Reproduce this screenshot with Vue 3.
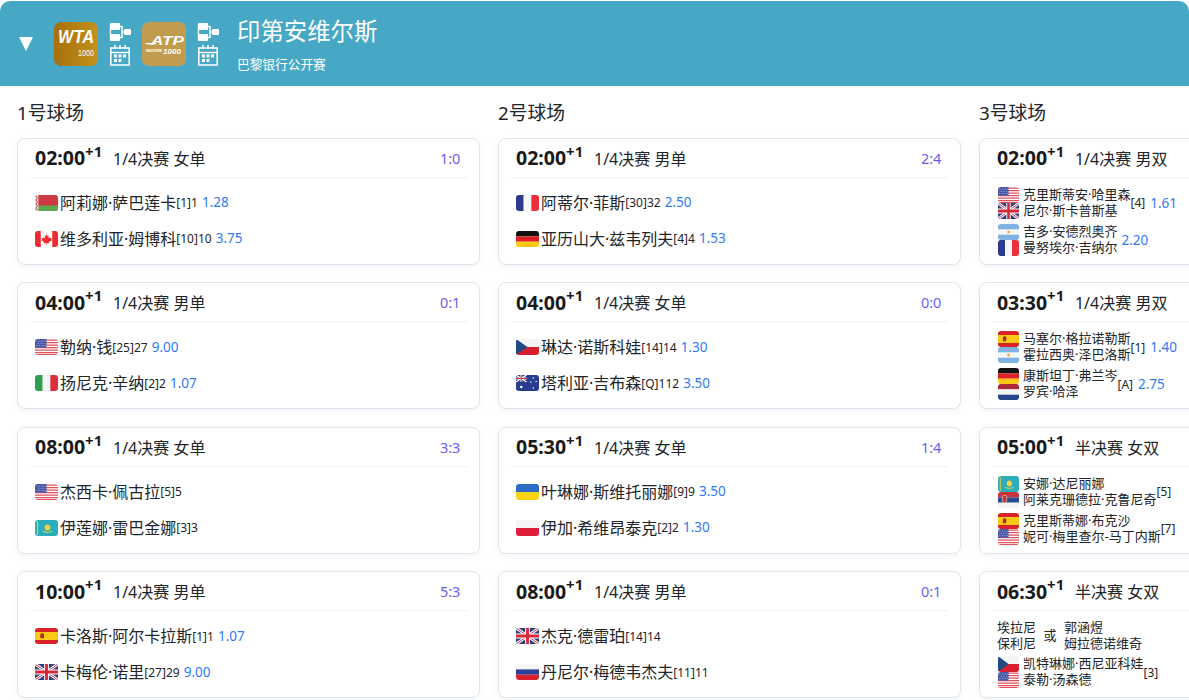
<script setup>
const FLAGS = {
  be: '<rect width="24" height="16" fill="#ce3a42"/><rect y="10.5" width="24" height="5.5" fill="#5aa84f"/><rect width="3.5" height="16" fill="#f3e3e3"/><path d="M1 1l1.5 2-1.5 2 1.5 2-1.5 2 1.5 2-1.5 2 1.5 2" stroke="#c9404a" fill="none"/>',
  ca: '<rect width="24" height="16" fill="#fff"/><rect width="6" height="16" fill="#ee2a30"/><rect x="18" width="6" height="16" fill="#ee2a30"/><path d="M12 3l1 2 1.4-.6-.5 3 1.6-1.2.5 1 1.7-.2-.6 1.8.7.4L14.500 11l.3 1.200L12.300 12v2h-.6v-2l-2.500.2.3-1.200L6.700 9.200l.7-.4-.6-1.800 1.700.2.500-1 1.600 1.200-.5-3 1.400.6z" fill="#ee2a30"/>',
  us: '<rect width="24" height="16" fill="#fff"/><path d="M0 1.200h24M0 3.700h24M0 6.200h24M0 8.700h24M0 11.200h24M0 13.700h24" stroke="#e0505c" stroke-width="1.250"/><rect y="15" width="24" height="1" fill="#e0505c"/><rect width="12" height="8.700" fill="#4a5aa8"/><g fill="#c8cfe8"><circle cx="2" cy="2" r=".5"/><circle cx="5" cy="2" r=".5"/><circle cx="8" cy="2" r=".5"/><circle cx="10.500" cy="2" r=".5"/><circle cx="3.500" cy="4.300" r=".5"/><circle cx="6.500" cy="4.300" r=".5"/><circle cx="9.500" cy="4.300" r=".5"/><circle cx="2" cy="6.600" r=".5"/><circle cx="5" cy="6.600" r=".5"/><circle cx="8" cy="6.600" r=".5"/><circle cx="10.500" cy="6.600" r=".5"/></g>',
  it: '<rect width="8" height="16" fill="#2f9e4f"/><rect x="8" width="8" height="16" fill="#f5f5f5"/><rect x="16" width="8" height="16" fill="#dc2f3c"/>',
  es: '<rect width="24" height="16" fill="#d8232a"/><rect y="4" width="24" height="8" fill="#fbc817"/><rect x="5.500" y="5.800" width="4" height="4.500" rx="1" fill="#a6321f"/><rect x="6.500" y="5" width="2" height="1.200" fill="#8a5a1a"/>',
  gb: '<rect width="24" height="16" fill="#2c3f80"/><path d="M0 0l24 16M24 0L0 16" stroke="#fff" stroke-width="3"/><path d="M0 0l24 16M24 0L0 16" stroke="#d8283c" stroke-width="1"/><path d="M12 0v16M0 8h24" stroke="#fff" stroke-width="5"/><path d="M12 0v16M0 8h24" stroke="#d8283c" stroke-width="3"/>',
  fr: '<rect width="8" height="16" fill="#2b3a8c"/><rect x="8" width="8" height="16" fill="#f6f6f6"/><rect x="16" width="8" height="16" fill="#ee2f3e"/>',
  de: '<rect width="24" height="5.400" fill="#111"/><rect y="5.400" width="24" height="5.300" fill="#dd1f26"/><rect y="10.700" width="24" height="5.300" fill="#fcc813"/>',
  cz: '<rect width="24" height="8" fill="#f5f5f5"/><rect y="8" width="24" height="8" fill="#d81f2f"/><path d="M0 0l12 8L0 16z" fill="#1f4a86"/>',
  au: '<rect width="24" height="16" fill="#273d8f"/><path d="M0 0l11 7M11 0L0 7" stroke="#fff" stroke-width="1.400"/><path d="M5.500 0v7M0 3.500h11" stroke="#fff" stroke-width="2"/><path d="M5.500 0v7M0 3.500h11" stroke="#d8283c" stroke-width="1"/><g fill="#fff"><circle cx="5.500" cy="12" r="1.300"/><circle cx="18" cy="3" r=".8"/><circle cx="21" cy="6.500" r=".8"/><circle cx="15.500" cy="7" r=".8"/><circle cx="18" cy="13" r=".8"/></g>',
  ua: '<rect width="24" height="8" fill="#2b6cc4"/><rect y="8" width="24" height="8" fill="#fbd315"/>',
  pl: '<rect width="24" height="8" fill="#f5f5f5"/><rect y="8" width="24" height="8" fill="#dc1f3c"/>',
  ru: '<rect width="24" height="5.400" fill="#f5f5f5"/><rect y="5.400" width="24" height="5.300" fill="#2b3f96"/><rect y="10.700" width="24" height="5.300" fill="#d8232f"/>',
  kz: '<rect width="24" height="16" fill="#2aaebd"/><circle cx="13" cy="7.500" r="3" fill="#f4d23c"/><path d="M8 11.500q5 2 10 0" stroke="#f4d23c" fill="none"/><rect x="2" y="1" width="1.200" height="14" fill="#e8c93a"/>',
  rs: '<rect width="24" height="5.400" fill="#c8323f"/><rect y="5.400" width="24" height="5.300" fill="#2c4a86"/><rect y="10.700" width="24" height="5.300" fill="#f5f5f5"/><rect x="5" y="3.500" width="5" height="7" rx="1.500" fill="#c8323f" stroke="#f1e6d0" stroke-width=".6"/>',
  ar: '<rect width="24" height="16" fill="#f6f6f6"/><rect width="24" height="5.300" fill="#7fb2e0"/><rect y="10.700" width="24" height="5.300" fill="#7fb2e0"/><circle cx="12" cy="8" r="1.500" fill="#e8a83c"/>',
  nl: '<rect width="24" height="5.400" fill="#ad2a38"/><rect y="5.400" width="24" height="5.300" fill="#f5f5f5"/><rect y="10.700" width="24" height="5.300" fill="#27478c"/>',
}

const s = (flag, name, seed, odds) => ({ flag, name, seed, odds })
const d = (players, seed, odds) => ({ players, seed, odds })

const courts = [
  {
    title: '1号球场',
    matches: [
      { time: '02:00', round: '1/4决赛 女单', score: '1:0', rows: [s('be', '阿莉娜·萨巴莲卡', '[1]1', '1.28'), s('ca', '维多利亚·姆博科', '[10]10', '3.75')] },
      { time: '04:00', round: '1/4决赛 男单', score: '0:1', rows: [s('us', '勒纳·钱', '[25]27', '9.00'), s('it', '扬尼克·辛纳', '[2]2', '1.07')] },
      { time: '08:00', round: '1/4决赛 女单', score: '3:3', rows: [s('us', '杰西卡·佩古拉', '[5]5', ''), s('kz', '伊莲娜·雷巴金娜', '[3]3', '')] },
      { time: '10:00', round: '1/4决赛 男单', score: '5:3', rows: [s('es', '卡洛斯·阿尔卡拉斯', '[1]1', '1.07'), s('gb', '卡梅伦·诺里', '[27]29', '9.00')] },
    ],
  },
  {
    title: '2号球场',
    matches: [
      { time: '02:00', round: '1/4决赛 男单', score: '2:4', rows: [s('fr', '阿蒂尔·菲斯', '[30]32', '2.50'), s('de', '亚历山大·兹韦列夫', '[4]4', '1.53')] },
      { time: '04:00', round: '1/4决赛 女单', score: '0:0', rows: [s('cz', '琳达·诺斯科娃', '[14]14', '1.30'), s('au', '塔利亚·吉布森', '[Q]112', '3.50')] },
      { time: '05:30', round: '1/4决赛 女单', score: '1:4', rows: [s('ua', '叶琳娜·斯维托丽娜', '[9]9', '3.50'), s('pl', '伊加·希维昂泰克', '[2]2', '1.30')] },
      { time: '08:00', round: '1/4决赛 男单', score: '0:1', rows: [s('gb', '杰克·德雷珀', '[14]14', ''), s('ru', '丹尼尔·梅德韦杰夫', '[11]11', '')] },
    ],
  },
  {
    title: '3号球场',
    matches: [
      { time: '02:00', round: '1/4决赛 男双', score: '', teams: [
        d([['us', '克里斯蒂安·哈里森'], ['gb', '尼尔·斯卡普斯基']], '[4]', '1.61'),
        d([['ar', '吉多·安德烈奥齐'], ['fr', '曼努埃尔·吉纳尔']], '', '2.20'),
      ] },
      { time: '03:30', round: '1/4决赛 男双', score: '', teams: [
        d([['es', '马塞尔·格拉诺勒斯'], ['ar', '霍拉西奥·泽巴洛斯']], '[1]', '1.40'),
        d([['de', '康斯坦丁·弗兰岑'], ['nl', '罗宾·哈泽']], '[A]', '2.75'),
      ] },
      { time: '05:00', round: '半决赛 女双', score: '', teams: [
        d([['kz', '安娜·达尼丽娜'], ['rs', '阿莱克珊德拉·克鲁尼奇']], '[5]', ''),
        d([['es', '克里斯蒂娜·布克沙'], ['us', '妮可·梅里查尔-马丁内斯']], '[7]', ''),
      ] },
      { time: '06:30', round: '半决赛 女双', score: '', tbd: [['埃拉尼', '保利尼'], ['郭涵煜', '姆拉德诺维奇']], teams: [
        d([['cz', '凯特琳娜·西尼亚科娃'], ['us', '泰勒·汤森德']], '[3]', ''),
      ] },
    ],
  },
]
</script>

<template>
  <div class="page">
    <header class="banner">
      <svg class="caret" viewBox="0 0 14 14"><polygon points="0,0 14,0 7,14" fill="#fff" /></svg>
      <div class="badge wta">
        <svg class="logo" viewBox="0 0 44 44" width="44" height="44">
          <text x="4" y="21" class="wta-word" textLength="36" lengthAdjust="spacingAndGlyphs">WTA</text>
          <text x="24" y="34" class="wta-num" textLength="16" lengthAdjust="spacingAndGlyphs">1000</text>
        </svg>
      </div>
      <div class="tools">
        <svg class="tool" viewBox="0 0 22 20" width="22" height="20">
          <g fill="#fff"><rect x="1" y="1" width="10" height="7" rx="1" /><rect x="1" y="12" width="10" height="7" rx="1" /><rect x="15" y="7" width="7" height="6" rx="1" /></g>
          <path d="M1.500 2v15M11 4.500h2v11h-2M13 10h2" stroke="#fff" stroke-width="1.400" fill="none" />
          <rect x="2.500" y="8" width="7" height="4" fill="#47a8c5" />
        </svg>
        <svg class="tool" viewBox="0 0 20 21" width="20" height="21">
          <g fill="none" stroke="#fff" stroke-width="1.500"><rect x=".8" y="3" width="18.400" height="17" /><path d="M1 7.500h18" /><path d="M5 0v4M10 0v4M15 0v4" /></g>
          <g fill="#fff"><rect x="4" y="9.500" width="3" height="3" /><rect x="8.500" y="9.500" width="3" height="3" /><rect x="13" y="9.500" width="3" height="3" /><rect x="4" y="14" width="3" height="3" /><rect x="8.500" y="14" width="3" height="3" /></g>
        </svg>
      </div>
      <div class="badge atp">
        <svg class="logo" viewBox="0 0 44 44" width="44" height="44">
          <path d="M2 21h13l-2 1.500H6z" fill="#fff" />
          <text x="9" y="22.500" class="atp-word" textLength="33" lengthAdjust="spacingAndGlyphs">ATP</text>
          <text x="4" y="30" class="atp-small" textLength="16" lengthAdjust="spacingAndGlyphs">MASTERS</text>
          <text x="21" y="32" class="atp-num" textLength="18" lengthAdjust="spacingAndGlyphs">1000</text>
        </svg>
      </div>
      <div class="tools">
        <svg class="tool" viewBox="0 0 22 20" width="22" height="20">
          <g fill="#fff"><rect x="1" y="1" width="10" height="7" rx="1" /><rect x="1" y="12" width="10" height="7" rx="1" /><rect x="15" y="7" width="7" height="6" rx="1" /></g>
          <path d="M1.500 2v15M11 4.500h2v11h-2M13 10h2" stroke="#fff" stroke-width="1.400" fill="none" />
          <rect x="2.500" y="8" width="7" height="4" fill="#47a8c5" />
        </svg>
        <svg class="tool" viewBox="0 0 20 21" width="20" height="21">
          <g fill="none" stroke="#fff" stroke-width="1.500"><rect x=".8" y="3" width="18.400" height="17" /><path d="M1 7.500h18" /><path d="M5 0v4M10 0v4M15 0v4" /></g>
          <g fill="#fff"><rect x="4" y="9.500" width="3" height="3" /><rect x="8.500" y="9.500" width="3" height="3" /><rect x="13" y="9.500" width="3" height="3" /><rect x="4" y="14" width="3" height="3" /><rect x="8.500" y="14" width="3" height="3" /></g>
        </svg>
      </div>
      <div class="heading">
        <div class="event">印第安维尔斯</div>
        <div class="sponsor">巴黎银行公开赛</div>
      </div>
    </header>

    <main class="courts">
      <section v-for="court in courts" :key="court.title" class="court">
        <h2 class="court-title">{{ court.title }}</h2>
        <article v-for="m in court.matches" :key="m.time + m.round" class="card">
          <div class="card-head">
            <span class="time">{{ m.time }}<sup class="plus">+1</sup></span>
            <span class="round">{{ m.round }}</span>
            <span class="score">{{ m.score }}</span>
          </div>
          <div class="card-body">
            <div v-for="r in m.rows" :key="r.name" class="row">
              <svg class="flag" viewBox="0 0 24 16" preserveAspectRatio="none"><g v-html="FLAGS[r.flag]" /></svg>
              <span class="name">{{ r.name }}</span>
              <span class="seed">{{ r.seed }}</span>
              <span v-if="r.odds" class="odds">{{ r.odds }}</span>
            </div>

            <div v-if="m.tbd" class="tbd">
              <div class="stack"><div v-for="n in m.tbd[0]" :key="n">{{ n }}</div></div>
              <span class="or">或</span>
              <div class="stack"><div v-for="n in m.tbd[1]" :key="n">{{ n }}</div></div>
            </div>
            <div v-for="t in m.teams" :key="t.players[0][1]" class="team">
              <div class="stack">
                <div v-for="p in t.players" :key="p[1]" class="player">
                  <svg class="flag small" viewBox="0 0 24 16" preserveAspectRatio="none"><g v-html="FLAGS[p[0]]" /></svg>
                  <span class="player-name">{{ p[1] }}</span>
                </div>
              </div>
              <span v-if="t.seed" class="team-seed">{{ t.seed }}</span>
              <span v-if="t.odds" class="odds team-odds">{{ t.odds }}</span>
            </div>
          </div>
        </article>
      </section>
    </main>
  </div>
</template>

<style>
html, body { margin: 0; overflow: hidden; background: #fff; }
</style>

<style scoped>
.page {
  width: 1189px;
  height: 700px;
  overflow: hidden;
  font-family: "Noto Sans", "Noto Sans CJK SC", sans-serif;
  color: #212529;
}
.banner {
  height: 85px;
  margin-top: 1px;
  display: flex;
  align-items: center;
  padding-left: 19px;
  background: #47a8c5;
  border-radius: 10px 10px 0 0;
}
.caret { width: 14px; height: 14px; margin-right: 21px; }
.badge { width: 44px; height: 44px; border-radius: 7px; }
.logo { display: block; overflow: visible; }
.wta { background: linear-gradient(90deg, #a56f0c, #c4921c); }
.atp { background: #c19c4f; }
.wta-word { font: italic 900 18px "Liberation Sans", sans-serif; fill: #fff; }
.wta-num { font: 400 9.500px "Liberation Sans", sans-serif; fill: #fff; }
.atp-word { font: italic 900 13px "Liberation Sans", sans-serif; fill: #fff; }
.atp-small { font: 700 3.500px "Liberation Sans", sans-serif; fill: #fff; }
.atp-num { font: italic 700 6.500px "Liberation Sans", sans-serif; fill: #fff; }
.tools { display: flex; flex-direction: column; align-items: center; gap: 3px; margin: 0 11px; }
.tool { display: block; }
.heading { margin-left: 7px; color: #fff; }
.event { font-size: 23.400px; line-height: 32px; }
.sponsor { font-size: 12.700px; line-height: 18px; margin-top: 8px; }

.courts { display: grid; grid-template-columns: repeat(3, 463.400px); column-gap: 17.600px; padding-left: 17px; }
.court-title { margin: 15px 0 12.500px; font-size: 18.800px; font-weight: 400; line-height: 24px; }
.card {
  box-sizing: border-box;
  height: 127px;
  margin-bottom: 17.500px;
  padding: 0 12px;
  background: #fff;
  border: 1px solid #dfe5ee;
  border-radius: 8px;
  box-shadow: 0 2px 6px rgba(60, 80, 110, .07);
}
.card-head {
  display: flex;
  align-items: center;
  height: 38px;
  padding: 0 7px 0 5px;
  border-bottom: 1px solid #eff1f4;
  white-space: nowrap;
}
.time { font-size: 19.500px; font-weight: 700; color: #1a1a1a; width: 78px; }
.plus { font-size: 15px; line-height: 0; position: relative; top: -1px; vertical-align: super; }
.round { font-size: 16px; }
.score { margin-left: auto; font-size: 14.500px; color: #6a5ff0; }
.card-body { height: 87px; display: flex; flex-direction: column; justify-content: center; padding-left: 5px; }
.row { display: flex; align-items: center; height: 36px; white-space: nowrap; }
.flag { width: 23px; height: 16px; border-radius: 3px; margin-right: 2px; flex: none; margin-bottom: 1px; }
.flag.small { width: 21px; height: 16px; margin-left: 1px; margin-right: 4px; margin-bottom: 0; }
.name { font-size: 16px; margin-bottom: 3px; }
.seed { font-size: 12px; margin-bottom: 1px; }
.odds { font-size: 13.500px; color: #2f7af5; margin-left: 6px; }
.row .odds { margin-left: 4px; margin-bottom: 2px; }
.team { display: flex; align-items: center; white-space: nowrap; margin: 2.500px 0; }
.stack { font-size: 13px; line-height: 16px; }
.player { display: flex; align-items: center; height: 16px; }
.player-name { margin-bottom: 2px; }
.team-seed { font-size: 12px; }
.team-odds { margin-left: 4px; }
.team-seed + .team-odds { margin-left: 5px; }
.tbd { display: flex; align-items: center; white-space: nowrap; margin-bottom: 3px; }
.or { font-size: 13px; margin: 0 7.500px; }
</style>
